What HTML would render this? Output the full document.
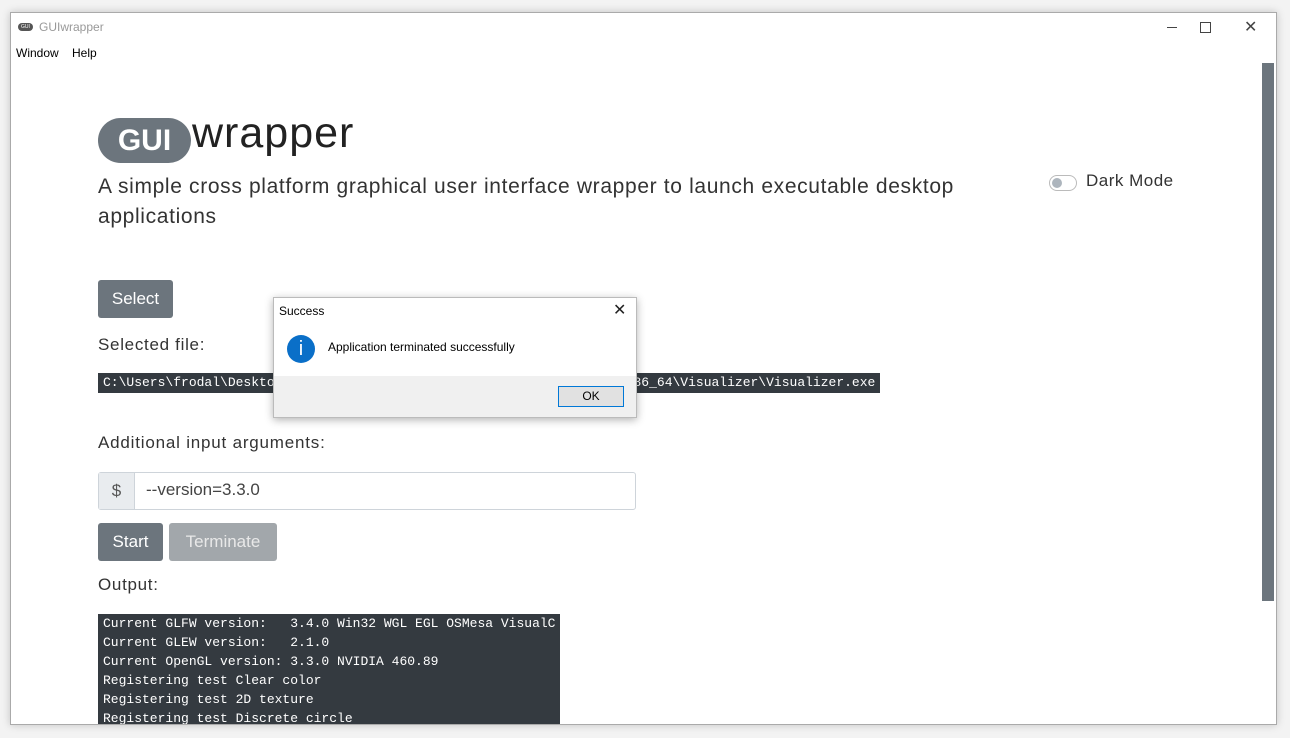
<!DOCTYPE html><html><head><style>
body{margin:0;width:1290px;height:738px;background:#f3f3f3;position:relative;overflow:hidden;font-family:"Liberation Sans",sans-serif}
.win{position:absolute;left:10px;top:12px;width:1265px;height:711px;background:#fff;border:1px solid #aaa;box-shadow:0 0 8px rgba(0,0,0,.2);overflow:hidden}
.a{position:absolute;white-space:nowrap}
.ls{letter-spacing:.7px}
.mono{font-family:"Liberation Mono",monospace;font-size:13px;color:#fff;white-space:pre}
</style></head><body>
<div class="win">
<div class="a" style="left:7px;top:10px;width:15px;height:8px;background:#555;border-radius:4px;color:#fff;font-size:5px;text-align:center;line-height:8px">GUI</div>
<div class="a" style="left:28px;top:7px;font-size:12px;color:#999">GUIwrapper</div>
<div class="a" style="left:1156px;top:14px;width:10px;height:1px;background:#444"></div>
<div class="a" style="left:1189px;top:9px;width:9px;height:9px;border:1px solid #444"></div>
<div class="a" style="left:1233px;top:4px;font-size:16px;color:#444">✕</div>
<div class="a" style="left:5px;top:33px;font-size:12px;color:#000">Window</div>
<div class="a" style="left:61px;top:33px;font-size:12px;color:#000">Help</div>
<div class="a" style="left:1251px;top:50px;width:12px;height:538px;background:#6c757d"></div>
<div class="a" style="left:87px;top:105px;width:93px;height:45px;border-radius:23px;background:#6c757d;color:#fff;font-size:30px;font-weight:bold;text-align:center;line-height:45px">GUI</div>
<div class="a" style="left:181px;top:96px;font-size:43px;letter-spacing:1px;color:#222">wrapper</div>
<div class="a" style="left:87px;top:159px;font-size:21px;letter-spacing:.65px;color:#333;line-height:30px">A simple cross platform graphical user interface wrapper to launch executable desktop<br>applications</div>
<div class="a" style="left:1038px;top:162px;width:26px;height:14px;border:1px solid #bbb;border-radius:8px"><div style="margin:2px;width:10px;height:10px;border-radius:5px;background:#adb5bd"></div></div>
<div class="a ls" style="left:1075px;top:158px;font-size:17px;color:#333;letter-spacing:.5px">Dark Mode</div>
<div class="a" style="left:87px;top:267px;width:75px;height:38px;background:#6c757d;border-radius:3px;color:#fff;font-size:17px;text-align:center;line-height:38px">Select</div>
<div class="a ls" style="left:87px;top:322px;font-size:17px;color:#333">Selected file:</div>
<div class="a mono" style="left:87px;top:360px;width:782px;height:20px;background:#343a40;line-height:20px;padding-left:5px;box-sizing:border-box">C:\Users\frodal\Desktop\GUIwrapper\build\Release\Visualizer-Win-v1-x86_64\Visualizer\Visualizer.exe</div>
<div class="a ls" style="left:87px;top:420px;font-size:17px;color:#333;letter-spacing:.8px">Additional input arguments:</div>
<div class="a" style="left:87px;top:459px;width:536px;height:36px;border:1px solid #ced4da;border-radius:3px"></div>
<div class="a" style="left:88px;top:460px;width:35px;height:36px;background:#e9ecef;border-right:1px solid #ced4da;color:#555;font-size:17px;text-align:center;line-height:36px">$</div>
<div class="a" style="left:135px;top:467px;font-size:17px;color:#444">--version=3.3.0</div>
<div class="a" style="left:87px;top:510px;width:65px;height:38px;background:#6c757d;border-radius:3px;color:#fff;font-size:17px;text-align:center;line-height:38px">Start</div>
<div class="a" style="left:158px;top:510px;width:108px;height:38px;background:#a2a7ab;border-radius:3px;color:#e8e8e8;font-size:17px;text-align:center;line-height:38px">Terminate</div>
<div class="a ls" style="left:87px;top:562px;font-size:17px;color:#333">Output:</div>
<div class="a mono" style="left:87px;top:601px;width:462px;height:115px;background:#343a40;padding:0 5px;box-sizing:border-box;line-height:19px;overflow:hidden">Current GLFW version:   3.4.0 Win32 WGL EGL OSMesa VisualC
Current GLEW version:   2.1.0
Current OpenGL version: 3.3.0 NVIDIA 460.89
Registering test Clear color
Registering test 2D texture
Registering test Discrete circle</div>
</div>
<div class="a" style="left:273px;top:297px;width:362px;height:119px;background:#f0f0f0;border:1px solid #bbb;box-shadow:0 2px 8px rgba(0,0,0,.3)">
<div style="position:absolute;left:0;top:0;width:362px;height:78px;background:#fff"></div>
<div class="a" style="left:5px;top:6px;font-size:12px;color:#000">Success</div>
<div class="a" style="left:339px;top:2px;font-size:16px;color:#222">✕</div>
<div class="a" style="left:13px;top:37px;width:28px;height:28px;border-radius:14px;background:#0a6fc8;color:#fff;font-size:20px;text-align:center;line-height:28px">i</div>
<div class="a" style="left:54px;top:42px;font-size:12px;color:#000">Application terminated successfully</div>
<div class="a" style="left:284px;top:88px;width:64px;height:19px;border:1px solid #0078d7;background:#e1e1e1;font-size:12px;text-align:center;line-height:19px">OK</div>
</div>
</body></html>
